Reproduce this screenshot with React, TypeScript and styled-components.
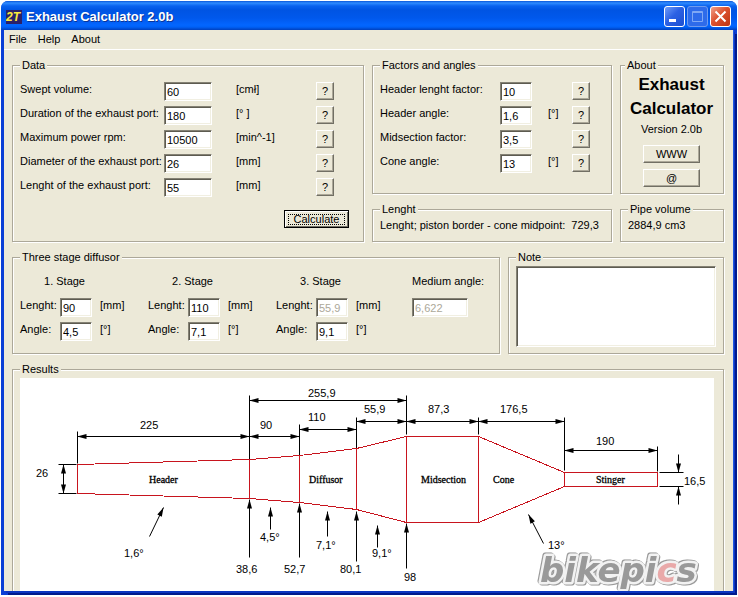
import React from "react";
import styled, { createGlobalStyle, css } from "styled-components";

const FACE = "#ece9d8";
const SHADOW = "#aca899";

const GlobalStyle = createGlobalStyle`
  *, *::before, *::after { box-sizing: border-box; }
  body { margin: 0; background: #fff; }
  body, button, input, textarea {
    font-family: "Liberation Sans", Arial, sans-serif;
    font-size: 11px;
    line-height: 14px;
    color: #000;
  }
`;

const Desktop = styled.div`
  height: 100vh;
  padding: 1px 1px 2px;
  overflow: hidden;
`;

const Window = styled.div`
  height: 100%;
  display: flex;
  flex-direction: column;
  overflow: hidden;
  border-radius: 7px 7px 0 0;
  background: #0a3fd6;
`;

const TitleBar = styled.header`
  display: flex;
  align-items: center;
  flex: none;
  height: 29px;
  padding: 2px 6px 0 5px;
  background: linear-gradient(
    #0a55d8 0,
    #2f8cff 2px,
    #0a62ee 5px,
    #0054e3 9px,
    #0058ec 17px,
    #0366ff 24px,
    #0061f7 26px,
    #0040bd 29px
  );
`;

const AppIcon = styled.svg`
  flex: none;
  width: 16px;
  height: 16px;
`;

const Title = styled.h1`
  flex: 1;
  margin: 0 0 0 4px;
  font: bold 13px/18px "Liberation Sans", Arial, sans-serif;
  color: #fff;
  text-shadow: 1px 1px 0 #0a3598;
`;

const Controls = styled.div`
  display: flex;
  gap: 2px;
`;

const ControlButton = styled.button<{ $kind: "min" | "max" | "close" }>`
  width: 21px;
  height: 21px;
  padding: 0;
  border: 1px solid #fff;
  border-radius: 3px;
  background: linear-gradient(135deg, #6f9df8, #2c61e4 45%, #1c4fd0);
  ${(p) =>
    p.$kind === "max" &&
    css`
      border-color: #6f9bee;
      background: #2e6bea;
    `}
  ${(p) =>
    p.$kind === "close" &&
    css`
      background: linear-gradient(135deg, #f0a08a, #dc5230 45%, #bd3411);
    `}
  svg { display: block; }
`;

const Client = styled.div`
  flex: 1;
  min-height: 0;
  display: flex;
  flex-direction: column;
  margin: 0 4px 4px 3px;
  background: ${FACE};
  box-shadow: 1px 0 0 #1f55e0, 2px 2px 0 #0b34c0, 4px 4px 0 #001a8c;
`;

const MenuBar = styled.nav`
  display: flex;
  flex: none;
  gap: 11px;
  height: 20px;
  padding: 1px 5px 0;
  border-bottom: 1px solid #fff;
`;

const MenuItem = styled.button`
  height: 15px;
  padding: 0;
  border: 0;
  background: none;
`;

const Main = styled.main`
  flex: 1;
  min-height: 0;
  display: flex;
  flex-direction: column;
  gap: 8px;
  padding: 8px 9px 0 8px;
  overflow: hidden;
`;

const TopRow = styled.div`
  display: grid;
  grid-template-columns: 352fr 240fr 104fr;
  gap: 8px;
`;

const MiddleRow = styled.div`
  display: grid;
  grid-template-columns: 488fr 216fr;
  gap: 8px;
`;

const Stack = styled.div`
  display: flex;
  flex-direction: column;
  gap: 8px;
`;

const Group = styled.fieldset<{ $open?: boolean; $grow?: boolean; $pad?: string }>`
  min-width: 0;
  margin: 0;
  padding: ${(p) => p.$pad ?? "10px 7px 7px"};
  border: 1px solid ${SHADOW};
  box-shadow: 1px 1px 0 #fff, inset 1px 1px 0 #fff;
  ${(p) => p.$grow && "flex: 1; min-height: 0;"}
  ${(p) => p.$open && "border-bottom: 0;"}

  & > legend {
    padding: 0 2px;
    line-height: 14px;
    background: ${FACE};
  }
`;

const FieldGrid = styled.div<{ $columns: string }>`
  display: grid;
  grid-template-columns: ${(p) => p.$columns};
  grid-auto-rows: 24px;
  align-items: start;
  white-space: nowrap;
`;

const Label = styled.label`
  line-height: 15px;
`;

const Text = styled.span`
  line-height: 15px;
`;

const Entry = styled.input`
  width: 100%;
  height: 19px;
  padding: 1px 0 0 2px;
  border: 1px solid;
  border-color: #848174 #fff #fff #848174;
  border-radius: 0;
  outline: 0;
  background: #fff;
  box-shadow: inset 1px 1px 0 #5d5b50, inset -1px -1px 0 #f1efe2;
  &:disabled { color: #aca899; }
`;

const Push = styled.button<{ $default?: boolean }>`
  height: 18px;
  padding: 0;
  line-height: 14px;
  border: 1px solid;
  border-color: #fff #716f64 #716f64 #fff;
  background: ${FACE};
  box-shadow: inset -1px -1px 0 ${SHADOW};
  ${(p) =>
    p.$default &&
    css`
      display: flex;
      align-items: center;
      justify-content: center;
      width: 65px;
      border-color: #000;
      box-shadow: inset 1px 1px 0 #fff, inset -1px -1px 0 #716f64;
      span {
        flex: 1;
        margin: 0 3px;
        line-height: 9px;
        border: 1px dotted #000;
      }
    `}
`;

const DataActions = styled.div`
  display: flex;
  justify-content: flex-end;
  padding: 8px 7px 0 0;
`;

const Reading = styled.p`
  display: flex;
  gap: 6px;
  margin: 0;
  line-height: 15px;
  white-space: nowrap;
`;

const AboutBody = styled.div`
  display: flex;
  flex-direction: column;
  align-items: center;
`;

const Brand = styled.h2`
  margin: 0 0 1px;
  font-size: 17px;
  line-height: 24px;
  text-align: center;
`;

const AboutButtons = styled.div`
  display: grid;
  width: 57px;
  gap: 6px;
  margin-top: 8px;
`;

const StageRow = styled.div`
  display: flex;
`;

const Stage = styled.section`
  width: 128px;
`;

const StageTitle = styled.h3`
  height: 24px;
  margin: 0 0 0 24px;
  font-size: 11px;
  font-weight: normal;
  line-height: 15px;
`;

const Medium = styled.div`
  display: grid;
  grid-template-rows: 24px 24px;
  width: 72px;
  margin-left: 8px;
  white-space: nowrap;
`;

const MediumEntry = styled(Entry)`
  width: 56px;
`;

const Memo = styled.textarea`
  display: block;
  width: 100%;
  height: 81px;
  border: 1px solid;
  border-color: #848174 #fff #fff #848174;
  outline: 0;
  resize: none;
  background: #fff;
  box-shadow: inset 1px 1px 0 #5d5b50, inset -1px -1px 0 #f1efe2;
`;

const Canvas = styled.div`
  height: 100%;
  overflow: hidden;
  background: #fff;
  svg { display: block; }
`;

const Watermark = styled.text`
  font: italic bold 34px "DejaVu Sans", sans-serif;
  fill: #999;
  stroke: #f2f2f2;
  stroke-width: 5px;
  stroke-linejoin: round;
  paint-order: stroke;
  filter: drop-shadow(1px 1px 0 #999) drop-shadow(-1px -1px 0 #999);
`;

type Field = { id: string; label: string; value: string; unit: string };

const dataFields: Field[] = [
  { id: "volume", label: "Swept volume:", value: "60", unit: "[cmł]" },
  { id: "duration", label: "Duration of the exhaust port:", value: "180", unit: "[° ]" },
  { id: "rpm", label: "Maximum power rpm:", value: "10500", unit: "[min^-1]" },
  { id: "diameter", label: "Diameter of the exhaust port:", value: "26", unit: "[mm]" },
  { id: "port", label: "Lenght of the exhaust port:", value: "55", unit: "[mm]" },
];

const factorFields: Field[] = [
  { id: "hfactor", label: "Header lenght factor:", value: "10", unit: "" },
  { id: "hangle", label: "Header angle:", value: "1,6", unit: "[°]" },
  { id: "mfactor", label: "Midsection factor:", value: "3,5", unit: "" },
  { id: "cangle", label: "Cone angle:", value: "13", unit: "[°]" },
];

const stages = [
  { n: 1, length: "90", angle: "4,5", locked: false },
  { n: 2, length: "110", angle: "7,1", locked: false },
  { n: 3, length: "55,9", angle: "9,1", locked: true },
];

function Fields({ items, columns }: { items: Field[]; columns: string }) {
  return (
    <FieldGrid $columns={columns}>
      {items.map((f) => (
        <React.Fragment key={f.id}>
          <Label htmlFor={f.id}>{f.label}</Label>
          <Entry id={f.id} defaultValue={f.value} />
          <span />
          <Text>{f.unit}</Text>
          <Push type="button" aria-label={`Help: ${f.label}`}>?</Push>
        </React.Fragment>
      ))}
    </FieldGrid>
  );
}

type Seg = [number, number, number, number];

const extensionLines: Seg[] = [
  [77, 431, 77, 463], [249, 395, 249, 459], [299, 424, 299, 455], [356, 417, 356, 448],
  [406, 395, 406, 434], [478, 417, 478, 434], [564, 417, 564, 470], [657, 446, 657, 471],
  [58, 464, 76, 464], [58, 493, 76, 493], [659, 472, 683, 472], [659, 486, 683, 486],
];

const spans: Seg[] = [
  [77, 436, 249, 436], [249, 436, 299, 436], [249, 400, 406, 400], [299, 429, 356, 429],
  [356, 421, 406, 421], [406, 421, 478, 421], [478, 421, 564, 421], [564, 450, 657, 450],
  [63, 464, 63, 493],
];

const pointers: Seg[] = [
  [249, 557, 249, 499], [299, 557, 299, 503], [356, 561, 356, 511], [406, 568, 406, 523],
  [270, 529, 270, 507], [327, 536, 327, 511], [377, 547, 377, 525],
  [149, 536, 163, 507], [543, 543, 528, 514],
  [678, 454, 678, 472], [678, 504, 678, 486],
];

const walls: Seg[] = [
  [77, 464, 77, 493], [249, 459, 249, 498], [299, 455, 299, 502], [356, 448, 356, 509],
  [406, 436, 406, 522], [478, 436, 478, 522], [564, 472, 564, 486], [657, 472, 657, 486],
];

const dimensions: [number, number, string][] = [
  [140, 429, "225"], [36, 477, "26"], [308, 397, "255,9"], [308, 421, "110"], [260, 429, "90"],
  [364, 413, "55,9"], [428, 413, "87,3"], [500, 413, "176,5"], [596, 445, "190"],
  [684, 485, "16,5"], [124, 557, "1,6°"], [260, 541, "4,5°"], [316, 549, "7,1°"],
  [372, 557, "9,1°"], [236, 573, "38,6"], [284, 573, "52,7"], [340, 573, "80,1"],
  [404, 581, "98"], [548, 549, "13°"],
];

const parts: [number, string][] = [
  [149, "Header"], [309, "Diffusor"], [421, "Midsection"], [493, "Cone"], [596, "Stinger"],
];

const line = ([x1, y1, x2, y2]: Seg, i: number) => (
  <line key={i} x1={x1} y1={y1} x2={x2} y2={y2} />
);

function Drawing() {
  return (
    <svg width="694" height="213" viewBox="20 378 694 213" role="img" aria-label="Exhaust pipe drawing">
      <defs>
        <marker id="head" markerUnits="userSpaceOnUse" markerWidth="10" markerHeight="6" refX="10" refY="3" orient="auto-start-reverse">
          <path d="M10 3L1 0.5V5.5Z" fill="#000" stroke="none" />
        </marker>
      </defs>
      <g transform="translate(0.5 0.5)" stroke="#000" fill="none">
        {extensionLines.map(line)}
        <g markerStart="url(#head)" markerEnd="url(#head)">{spans.map(line)}</g>
        <g markerEnd="url(#head)">{pointers.map(line)}</g>
        <g stroke="#c8141e" shapeRendering="crispEdges">
          {walls.map(line)}
          <path d="M77 464L249 459L299 455L356 448L406 436H478L564 472H657V486H564L478 522H406L356 509L299 502L249 498L77 493" />
        </g>
      </g>
      <g fontFamily="Liberation Sans, Arial, sans-serif" fontSize="11">
        {dimensions.map(([x, y, t]) => <text key={t} x={x} y={y}>{t}</text>)}
      </g>
      <g fontFamily="Liberation Serif, serif" fontSize="10" stroke="#000" strokeWidth="0.3">
        {parts.map(([x, t]) => <text key={t} x={x} y={483}>{t}</text>)}
      </g>
      <Watermark x="540" y="582">
        bikepi<tspan fill="#e9a9a9">c</tspan>s
      </Watermark>
    </svg>
  );
}

export default function App() {
  return (
    <>
      <GlobalStyle />
      <Desktop>
        <Window>
          <TitleBar>
            <AppIcon viewBox="0 0 16 16" aria-hidden="true">
              <rect y="1" width="16" height="14" fill="#2b2168" />
              <text x="0" y="12" fontFamily="Liberation Sans, Arial, sans-serif" fontSize="12" fontWeight="bold" fontStyle="italic" fill="#ffec3d">2T</text>
            </AppIcon>
            <Title>Exhaust Calculator 2.0b</Title>
            <Controls>
              <ControlButton $kind="min" aria-label="Minimize">
                <svg width="19" height="19"><rect x="4" y="12" width="7" height="3" fill="#fff" /></svg>
              </ControlButton>
              <ControlButton $kind="max" aria-label="Maximize" disabled>
                <svg width="19" height="19" fill="none" stroke="#7fa8f4"><path d="M4.500 4.500H14.500V14.500H4.500ZM4 5.500H15" /></svg>
              </ControlButton>
              <ControlButton $kind="close" aria-label="Close">
                <svg width="19" height="19" stroke="#fff" strokeWidth="2"><path d="M4.500 4.500L14.500 14.500M14.500 4.500L4.500 14.500" /></svg>
              </ControlButton>
            </Controls>
          </TitleBar>
          <Client>
            <MenuBar>
              <MenuItem>File</MenuItem>
              <MenuItem>Help</MenuItem>
              <MenuItem>About</MenuItem>
            </MenuBar>
            <Main>
              <TopRow>
                <Group>
                  <legend>Data</legend>
                  <Fields items={dataFields} columns="144px 48px 24px 80px 18px" />
                  <DataActions>
                    <Push type="button" $default><span>Calculate</span></Push>
                  </DataActions>
                </Group>
                <Stack>
                  <Group $grow>
                    <legend>Factors and angles</legend>
                    <Fields items={factorFields} columns="120px 32px 16px 24px 18px" />
                  </Group>
                  <Group $pad="2px 7px 8px">
                    <legend>Lenght</legend>
                    <Reading><span>Lenght; piston border - cone midpoint:</span><span>729,3</span></Reading>
                  </Group>
                </Stack>
                <Stack>
                  <Group $grow $pad="1px 5px 6px 4px">
                    <legend>About</legend>
                    <AboutBody>
                      <Brand>Exhaust<br />Calculator</Brand>
                      <Text>Version 2.0b</Text>
                      <AboutButtons>
                        <Push type="button">WWW</Push>
                        <Push type="button">@</Push>
                      </AboutButtons>
                    </AboutBody>
                  </Group>
                  <Group $pad="2px 7px 8px">
                    <legend>Pipe volume</legend>
                    <Reading>2884,9 cm3</Reading>
                  </Group>
                </Stack>
              </TopRow>
              <MiddleRow>
                <Group>
                  <legend>Three stage diffusor</legend>
                  <StageRow>
                    {stages.map((s) => (
                      <Stage key={s.n}>
                        <StageTitle>{s.n}. Stage</StageTitle>
                        <FieldGrid $columns="40px 32px 8px 40px">
                          <Label htmlFor={`len${s.n}`}>Lenght:</Label>
                          <Entry id={`len${s.n}`} defaultValue={s.length} disabled={s.locked} />
                          <span />
                          <Text>[mm]</Text>
                          <Label htmlFor={`ang${s.n}`}>Angle:</Label>
                          <Entry id={`ang${s.n}`} defaultValue={s.angle} />
                          <span />
                          <Text>[°]</Text>
                        </FieldGrid>
                      </Stage>
                    ))}
                    <Medium>
                      <Label htmlFor="medium">Medium angle:</Label>
                      <MediumEntry id="medium" defaultValue="6,622" disabled />
                    </Medium>
                  </StageRow>
                </Group>
                <Group $pad="2px 7px 6px">
                  <legend>Note</legend>
                  <Memo aria-label="Note" />
                </Group>
              </MiddleRow>
              <Group $open $grow $pad="2px 9px 0 7px">
                <legend>Results</legend>
                <Canvas><Drawing /></Canvas>
              </Group>
            </Main>
          </Client>
        </Window>
      </Desktop>
    </>
  );
}
